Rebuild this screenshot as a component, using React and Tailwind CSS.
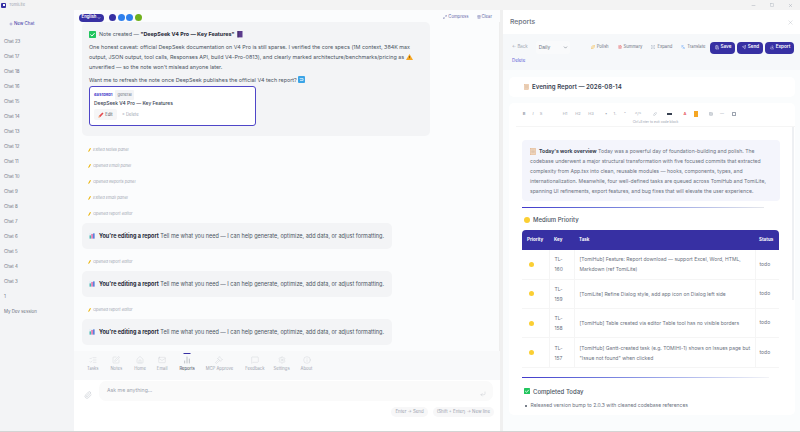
import React from "react";
import { Plus, Minus, Square, X, Maximize2, Trash2, ChevronDown, ListChecks, SquarePen, Home, Mail, ChartNoAxesColumn, Gavel, MessageSquare, Settings, Info, Paperclip, CornerDownLeft, Save, Send, Download, Link, Table, Sparkles, FileText, Languages, Expand } from "lucide-react";

const chats = ["Chat 23","Chat 17","Chat 18","Chat 16","Chat 15","Chat 14","Chat 13","Chat 12","Chat 11","Chat 10","Chat 9","Chat 8","Chat 7","Chat 6","Chat 5","Chat 4","Chat 3","1","My Dev session"];

const Check = ({ s = 7 }) => (
  <svg width={s} height={s} viewBox="0 0 10 10" className="shrink-0">
    <rect width="10" height="10" rx="1" fill="#22c55e" />
    <path d="M2 5l2.2 2.2L8 3" fill="none" stroke="#fff" strokeWidth="1.4" />
  </svg>
);
const Notebook = () => (
  <svg width="6" height="7" viewBox="0 0 6 7" className="shrink-0"><rect width="5" height="6.4" x=".5" fill="#5b3b8c" /><rect x=".5" width="1" height="6.4" fill="#3f2a63" /></svg>
);
const Warn = () => (
  <svg width="7" height="6" viewBox="0 0 7 6" className="inline-block align-[-0.5px]"><path d="M3.5 0L7 6H0z" fill="#f5a623" /><rect x="3.2" y="2" width=".6" height="2.2" fill="#5a3b00" /></svg>
);
const Refresh = () => (
  <svg width="7" height="7" viewBox="0 0 7 7" className="inline-block align-[-1px]"><rect width="7" height="7" rx="1" fill="#3ba4e6" /><path d="M1.7 2.6h3.4v1.8H2" fill="none" stroke="#fff" strokeWidth=".7" /></svg>
);
const Pencil = ({ s = 6 }) => (
  <svg width={s} height={s} viewBox="0 0 6 6" className="shrink-0"><path d="M.5 5.5l.6-1.8L4.4.5l1.1 1.1-3.2 3.3z" fill="#e5484d" /><path d="M.5 5.5l.6-1.8 1.2 1.2z" fill="#f6c177" /></svg>
);
const Memo = ({ s = 6 }) => (
  <svg width={s} height={s + 1} viewBox="0 0 6 7" className="shrink-0"><rect width="5.4" height="6.6" x=".3" y=".2" fill="#f6dcc4" stroke="#d9a679" strokeWidth=".4" /><path d="M1.2 2h3.6M1.2 3.4h3.6M1.2 4.8h3.6" stroke="#b89a80" strokeWidth=".4" /></svg>
);
const Bars = () => (
  <svg width="6" height="6" viewBox="0 0 6 6" className="shrink-0"><rect width="6" height="6" fill="#e7eef6" /><rect x=".6" y="2.4" width="1.3" height="3.2" fill="#2fb6a5" /><rect x="2.4" y="1" width="1.3" height="4.6" fill="#e0569b" /><rect x="4.2" y=".4" width="1.3" height="5.2" fill="#3767d6" /></svg>
);
const Dot = ({ s = 5 }) => <span className="block shrink-0 rounded-full bg-[#fbcf33]" style={{ width: s, height: s }} />;

const Log = ({ children }) => (
  <div className="flex h-[16px] items-center gap-[2px] pl-[14px] text-[4px] italic text-[#9ca3af]">
    <svg width="3" height="4" viewBox="0 0 3 4" className="shrink-0"><path d="M0 4l.6-1.4L2 0l1 .6-1.6 2.6z" fill="#eab308" /></svg>
    {children}
  </div>
);

const Bubble = () => (
  <div className="ml-[8px] flex h-[26px] w-[310px] items-center gap-[2px] rounded-[5px] bg-[#f3f4f6] pl-[7px] text-[5.5px] text-[#4b5563]">
    <Bars />
    <span className="ml-[2px] whitespace-nowrap"><b className="font-bold text-[#1f2937]">You're editing a report</b> Tell me what you need — I can help generate, optimize, add data, or adjust formatting.</span>
  </div>
);

const tabs = [
  [ListChecks, "Tasks"], [SquarePen, "Notes"], [Home, "Home"], [Mail, "Email"], [ChartNoAxesColumn, "Reports"],
  [Gavel, "MCP Approve"], [MessageSquare, "Feedback"], [Settings, "Settings"], [Info, "About"],
];
const tabGaps = ["ml-0", "ml-[12px]", "ml-[12px]", "ml-[11px]", "ml-[12px]", "ml-[11px]", "ml-[12px]", "ml-[9px]", "ml-[11px]"];

const ToolBtn = ({ icon, children }) => (
  <span className="flex items-center gap-[2px] text-[4.2px] text-[#6b7280]">{icon}{children}</span>
);
const PrimaryBtn = ({ I, children, w }) => (
  <span className={`flex h-[12px] items-center justify-center gap-[1.5px] rounded-[4px] bg-[#3730a3] text-[4.6px] font-semibold text-white ${w}`}>
    <I size={4.5} strokeWidth={2} />{children}
  </span>
);

const Slot = ({ w, children }) => <span className={`flex shrink-0 items-center justify-center ${w}`}>{children}</span>;

const rows = [
  ["160", <>[TomiHub] Feature: Report download — support Excel, Word, HTML,<br />Markdown (ref TomiLite)</>],
  ["159", "[TomiLite] Refine Dialog style, add app icon on Dialog left side"],
  ["158", "[TomiHub] Table created via editor Table tool has no visible borders"],
  ["157", <>[TomiHub] Gantt-created task (e.g. TOMIHI-1) shows on Issues page but<br />"Issue not found" when clicked</>],
];

export default function App() {
  return (
    <div className="flex h-[432px] w-[800px] flex-col overflow-hidden border-b border-[#d4d4d4] bg-[#f3f3f3] font-['Inter',sans-serif] text-[#4b5563]">
      <div className="flex h-[10px] shrink-0 items-center pl-[1px] pr-[7px]">
        <span className="flex h-[5px] w-[5px] items-center justify-center rounded-[1px] bg-[#3730a3]"><span className="h-[2px] w-[2px] bg-white" /></span>
        <span className="ml-[3px] text-[4px] text-[#9ca3af]">TomiLite</span>
        <div className="ml-auto flex items-center gap-[14px] text-[#9ca3af]">
          <Minus size={5} /><Square size={4} /><X size={5} />
        </div>
      </div>
      <div className="flex min-h-0 flex-1">
        <aside className="flex w-[74px] shrink-0 flex-col bg-[#f3f4f6]">
          <div className="flex h-[24px] items-center pl-[9px] pt-[4px] text-[4.4px] text-[#3730a3]"><Plus size={4} className="mr-[1px]" />New Chat</div>
          <div className="flex flex-col pt-[1px]">
            {chats.map((c) => (
              <div key={c} className="flex h-[15px] items-center pl-[4px] text-[4.4px] text-[#6b7280]">{c}</div>
            ))}
          </div>
        </aside>
        <main className="flex w-[426px] shrink-0 flex-col bg-[#fbfcfd]">
          <div className="flex h-[12px] shrink-0 items-center pl-[5px] pr-[8px] pt-[3px]">
            <span className="flex h-[8px] w-[25px] items-center justify-center gap-[1px] rounded-full bg-[#3730a3] text-[4.2px] font-semibold text-white">English<ChevronDown size={4} strokeWidth={3} /></span>
            <div className="ml-[5px] flex gap-[1.5px]">
              <span className="h-[7px] w-[7px] rounded-full bg-[#3730a3]" />
              <span className="h-[7px] w-[7px] rounded-full bg-[#2f80ed]" />
              <span className="h-[7px] w-[7px] rounded-full bg-[#2f80ed]" />
              <span className="h-[7px] w-[7px] rounded-full bg-[#6fb01d]" />
            </div>
            <div className="ml-auto flex items-center gap-[8px] text-[4.2px] text-[#6366a8]">
              <span className="flex items-center gap-[1px]"><Maximize2 size={4} />Compress</span>
              <span className="flex items-center gap-[1px]"><Trash2 size={4} />Clear</span>
            </div>
          </div>
          <div className="min-h-0 w-full flex-1 overflow-hidden border-r border-[#eeeeee] bg-[#fbfcfd]">
            <div className="ml-[8px] h-[114px] w-[348px] rounded-[5px] bg-[#f3f4f6] pl-[7px] pt-[7px] text-[5.4px] leading-[10px] text-[#4b5563]">
              <div className="flex h-[10px] items-center gap-[3px] text-[5.4px]">
                <Check />
                <span>Note created — <b className="font-bold text-[#1f2937]">"DeepSeek V4 Pro — Key Features"</b></span>
                <Notebook />
              </div>
              <p className="mt-[3px]">One honest caveat: official DeepSeek documentation on V4 Pro is still sparse. I verified the core specs (1M context, 384K max<br />output, JSON output, tool calls, Responses API, build V4-Pro-0813), and clearly marked architecture/benchmarks/pricing as <Warn /><br />unverified — so the note won't mislead anyone later.</p>
              <p className="mt-[3px]">Want me to refresh the note once DeepSeek publishes the official V4 tech report? <Refresh /></p>
              <div className="mt-[1px] h-[40px] w-[167px] rounded-[3px] border border-[#4f46c8] bg-white pl-[4px] pt-[4px]">
                <div className="flex h-[7px] items-center gap-[3px] text-[4px]">
                  <span className="font-bold text-[#4338ca]">6a51b8b1</span>
                  <span className="rounded-[1px] bg-[#f3f4f6] px-[2px] text-[#6b7280]">general</span>
                </div>
                <div className="h-[10px] text-[4.9px] font-medium leading-[10px] text-[#374151]">DeepSeek V4 Pro — Key Features</div>
                <div className="mt-[1px] flex items-center gap-[5px] text-[4.2px]">
                  <span className="flex h-[11px] w-[23px] items-center justify-center gap-[1px] rounded-[2px] bg-[#f6f6f7] text-[#4b5563]"><Pencil />Edit</span>
                  <span className="text-[#9ca3af]">× Delete</span>
                </div>
              </div>
            </div>
            <div className="mt-[6px]">
              <Log>Exited Notes panel</Log>
              <Log>Opened Email panel</Log>
              <Log>Opened Reports panel</Log>
              <Log>Exited Email panel</Log>
              <Log>Opened report editor</Log>
            </div>
            <div className="mt-[1px]"><Bubble /></div>
            <div className="mt-[5px]"><Log>Opened report editor</Log></div>
            <div className="mt-[1px]"><Bubble /></div>
            <div className="mt-[5px]"><Log>Opened report editor</Log></div>
            <div className="mt-[1px]"><Bubble /></div>
          </div>
          <nav className="flex h-[29px] shrink-0 items-start bg-[#f8f9fa] pl-[13px]">
            {tabs.map(([I, label], i) => (
              <div key={label} className={`relative flex h-[24px] flex-col items-center pt-[5px] text-[4.2px] ${tabGaps[i]} ${i === 4 ? "text-[#374151]" : "text-[#9ca3af]"}`}>
                {i === 4 && <span className="absolute left-1/2 top-[2px] h-[1px] w-[7px] -translate-x-1/2 bg-[#3730a3]" />}
                <I size={8} strokeWidth={1} className={i === 4 ? "text-[#4b5563]" : "text-[#c4c8ce]"} />
                <span className="mt-[1.5px]">{label}</span>
              </div>
            ))}
          </nav>
          <div className="flex h-[51px] shrink-0 flex-col bg-white">
            <div className="mt-[1px] flex items-center pl-[10px] pr-[7px]">
              <Paperclip size={8} strokeWidth={1} className="mt-[8px] text-[#9ca3af]" />
              <div className="ml-[7px] flex h-[20px] flex-1 items-center rounded-[7px] bg-[#fafafa] pl-[8px] pr-[7px] text-[5.2px] text-[#9ca3af]">
                Ask me anything...
                <CornerDownLeft size={6} strokeWidth={1} className="ml-auto mt-[5px]" />
              </div>
            </div>
            <div className="mt-[6px] flex justify-end gap-[5px] pr-[6px] text-[4.4px] text-[#9ca3af]">
              <span className="rounded-full bg-[#f7f7f8] px-[4px] py-[1.5px]">Enter → Send</span>
              <span className="rounded-full bg-[#f7f7f8] px-[4px] py-[1.5px]">(Shift + Enter) → New line</span>
            </div>
          </div>
        </main>
        <div className="w-[3px] shrink-0 bg-[#f0f0f0]" />
        <section className="flex min-w-0 flex-1 flex-col bg-[#fbfcfd]">
          <div className="flex h-[24px] shrink-0 items-center bg-white pl-[7px] pr-[6px] text-[6.8px] font-medium text-[#6b7280]">
            Reports
            <X size={7} strokeWidth={1} className="ml-auto text-[#9ca3af]" />
          </div>
          <div className="h-[36px] shrink-0 bg-[#f6f8fa] pl-[9px] pt-[7px]">
            <div className="flex h-[13px] items-center">
              <span className="text-[4.4px] text-[#9ca3af]">← Back</span>
              <span className="ml-[8px] flex h-[13px] w-[34px] items-center justify-between rounded-[3px] bg-[#f9fafb] pl-[3px] pr-[2px] text-[5px] text-[#6b7280]">Daily<ChevronDown size={5} className="text-[#374151]" /></span>
              <div className="ml-[21px] flex items-center gap-[9px]">
                <ToolBtn icon={<Sparkles size={4} className="text-[#f5b32e]" />}>Polish</ToolBtn>
                <ToolBtn icon={<FileText size={4} className="text-[#e5484d]" />}>Summary</ToolBtn>
                <ToolBtn icon={<Expand size={4} className="text-[#94a3b8]" />}>Expand</ToolBtn>
                <ToolBtn icon={<Languages size={4} className="text-[#60a5fa]" />}>Translate</ToolBtn>
              </div>
              <div className="ml-[5px] flex gap-[2px]">
                <PrimaryBtn I={Save} w="w-[25px]">Save</PrimaryBtn>
                <PrimaryBtn I={Send} w="w-[26px]">Send</PrimaryBtn>
                <PrimaryBtn I={Download} w="w-[29px]">Export</PrimaryBtn>
              </div>
            </div>
            <div className="mt-[3px] text-[4.4px] leading-[7px] text-[#5b5bd6]">Delete</div>
          </div>
          <div className="min-h-0 flex-1 bg-[#fafcfd] pl-[6px] pr-[5px] pt-[1px]">
            <div className="mt-[6px] flex h-[20px] items-center gap-[2px] rounded-[5px] bg-white pl-[15px] text-[6.1px] font-semibold text-[#374151]">
              <Memo s={5} /><span className="ml-[1px]">Evening Report — 2026-08-14</span>
            </div>
            <div className="mt-[6px] h-[312px] rounded-[5px] bg-white pl-[7px] pt-[5px]">
              <div className="flex h-[12px] items-center pl-[4px] text-[4px] text-[#9ca3af]">
                <Slot w="w-[8px]"><span className="font-bold">B</span></Slot>
                <Slot w="w-[10px]"><span className="italic">I</span></Slot>
                <Slot w="w-[6px]">S</Slot>
                <span className="w-[15px] shrink-0" />
                <Slot w="w-[12px]">H1</Slot>
                <Slot w="w-[14px]">H2</Slot>
                <Slot w="w-[12px]">H3</Slot>
                <span className="w-[5px] shrink-0" />
                <Slot w="w-[8px]">•</Slot>
                <Slot w="w-[10px]">1.</Slot>
                <Slot w="w-[10px]">"</Slot>
                <Slot w="w-[16px]">&lt;/&gt;</Slot>
                <span className="w-[3px] shrink-0" />
                <Slot w="w-[12px]"><Link size={4} /></Slot>
                <Slot w="w-[16px]"><span className="h-[2px] w-[5px] bg-[#374151]" /></Slot>
                <span className="w-[3px] shrink-0" />
                <Slot w="w-[10px]"><span className="font-semibold text-[#e5484d]">A</span></Slot>
                <Slot w="w-[12px]"><span className="h-[6px] w-[4px] bg-[#f5a623]" /></Slot>
                <span className="w-[3px] shrink-0" />
                <Slot w="w-[12px]"><Table size={4} /></Slot>
                <Slot w="w-[10px]">—</Slot>
                <Slot w="w-[14px]"><span className="h-[4px] w-[4px] rounded-[0.5px] border-[0.5px] border-[#9ca3af]" /></Slot>
              </div>
              <div className="text-center text-[3.4px] leading-[5px] text-[#9ca3af]">Ctrl+Enter to exit code block</div>
              <div className="relative mt-[1px] h-[287px] border-t border-[#f5f5f5] pl-[6px] pt-[13px] text-[5px] text-[#6b7280]">
                <span className="absolute right-[1px] top-0 h-[173px] w-[2px] bg-[#eef0f3]" />
                <div className="h-[61px] w-[258px] rounded-[4px] bg-[#f4f5fc] pl-[8px] pt-[6px] text-[5.1px] leading-[10px]">
                  <div className="flex items-center gap-[2px] whitespace-nowrap"><Memo /><span className="ml-[1px]"><b className="font-bold text-[#374151]">Today's work overview</b> Today was a powerful day of foundation-building and polish. The</span></div>
                  <div className="whitespace-nowrap">codebase underwent a major structural transformation with five focused commits that extracted</div>
                  <div className="whitespace-nowrap">complexity from App.tsx into clean, reusable modules — hooks, components, types, and</div>
                  <div className="whitespace-nowrap">internationalization. Meanwhile, four well-defined tasks are queued across TomiHub and TomiLite,</div>
                  <div className="whitespace-nowrap">spanning UI refinements, export features, and bug fixes that will elevate the user experience.</div>
                </div>
                <div className="mt-[6px] h-[1px] w-[242px] bg-gradient-to-r from-[#4338ca] to-[#e5e7eb]" />
                <div className="mt-[7px] flex h-[9px] items-center gap-[3px] pl-[2px] text-[6px] font-medium text-[#4b5563]"><Dot s={6} />Medium Priority</div>
                <table className="mt-[6px] w-[257px] table-fixed border-collapse text-[5px]">
                  <thead>
                    <tr className="h-[20px] text-left text-[4.5px] text-white">
                      <th className="w-[27px] rounded-tl-[4px] bg-[#3730a3] pl-[5px] font-bold">Priority</th>
                      <th className="w-[25px] bg-[#3730a3] pl-[5px] font-bold">Key</th>
                      <th className="bg-[#3730a3] pl-[5px] font-bold">Task</th>
                      <th className="w-[24px] rounded-tr-[4px] bg-[#3730a3] pl-[4px] font-bold">Status</th>
                    </tr>
                  </thead>
                  <tbody>
                    {rows.map(([k, t]) => (
                      <tr key={k} className="h-[29.3px] border-b border-[#f5f5f5]">
                        <td className="border-r border-[#f5f5f5] pl-[7px]"><Dot /></td>
                        <td className="border-r border-[#f5f5f5] pl-[5px] leading-[10px]">TL-<br />{k}</td>
                        <td className="border-r border-[#f5f5f5] pl-[5px] leading-[10px] whitespace-nowrap">{t}</td>
                        <td className="pl-[4px]">todo</td>
                      </tr>
                    ))}
                  </tbody>
                </table>
                <div className="mt-[9px] h-[1px] w-[247px] bg-gradient-to-r from-[#4338ca] to-[#f3f4f6]" />
                <div className="mt-[9px] flex h-[9px] items-center gap-[3px] pl-[2px] text-[6px] font-medium text-[#4b5563]"><Check s={6} />Completed Today</div>
                <div className="mt-[7px] flex h-[7px] items-center pl-[3px] text-[5px]"><span className="mr-[4px] h-[1.5px] w-[1.5px] rounded-full bg-[#4b5563]" />Released version bump to 2.0.3 with cleaned codebase references</div>
              </div>
            </div>
          </div>
        </section>
      </div>
    </div>
  );
}
